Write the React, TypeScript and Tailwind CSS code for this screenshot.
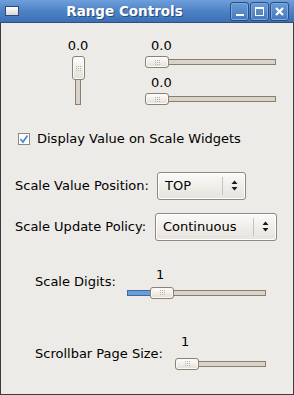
import React from "react";

const font = { fontFamily: '"DejaVu Sans", "Liberation Sans", sans-serif' };

function Grip() {
  const dots = [];
  for (let r = 0; r < 3; r++) {
    for (let c = 0; c < 3; c++) {
      dots.push(<span key={`${r}-${c}`} className="h-px w-px bg-[#b9b2a6]" />);
    }
  }
  return <div className="grid grid-cols-3 gap-px">{dots}</div>;
}

function Thumb({ vertical }: { vertical?: boolean }) {
  return (
    <div
      className={`flex shrink-0 items-center justify-center rounded-[3px] border border-[#8c826f] bg-gradient-to-b from-[#ffffff] to-[#e2ded7] shadow-[inset_0_0_0_1px_#fbfaf8] ${
        vertical ? "h-[24px] w-[13px]" : "h-[12px] w-[24px]"
      }`}
    >
      <Grip />
    </div>
  );
}

function HScale({
  width,
  offset,
  value,
  fill,
  labelHeight = 18,
}: {
  width: number;
  offset: number;
  value: string;
  fill?: boolean;
  labelHeight?: number;
}) {
  return (
    <div className="flex flex-col" style={{ width }}>
      <div
        className="text-[13px] leading-[15px] text-black"
        style={{ paddingLeft: offset + 6, height: labelHeight }}
      >
        {value}
      </div>
      <div className="flex items-center">
        {offset > 0 && (
          <div
            className={`h-[6px] border border-r-0 ${
              fill ? "border-[#3a6aa8] bg-[#6c9ed8]" : "border-[#8b7f6b] bg-[#d8d3cb]"
            }`}
            style={{ width: offset }}
          />
        )}
        <Thumb />
        <div className="h-[6px] flex-1 border border-l-0 border-[#8b7f6b] bg-[#d8d3cb]" />
      </div>
    </div>
  );
}

function UpDown() {
  return (
    <svg width="7" height="11" viewBox="0 0 7 11">
      <path d="M3.5 0.5 L6.5 4 L0.5 4 Z" fill="#1a1a1a" />
      <path d="M3.5 10.5 L6.5 7 L0.5 7 Z" fill="#1a1a1a" />
    </svg>
  );
}

function Combo({ width, text }: { width: number; text: string }) {
  return (
    <div
      className="flex h-[28px] items-center rounded-[3px] border border-[#8e887d] bg-gradient-to-b from-[#fbfaf9] to-[#e6e2dc] shadow-[inset_0_0_0_1px_#ffffff]"
      style={{ width }}
    >
      <span className="flex-1 pl-[7px] text-[13px] text-black">{text}</span>
      <div className="h-[18px] w-px bg-[#c9c4bb]" />
      <div className="flex w-[22px] items-center justify-center">
        <UpDown />
      </div>
    </div>
  );
}

function TitleButton({ children }: { children: React.ReactNode }) {
  return (
    <div className="flex h-[19px] w-[19px] items-center justify-center rounded-[3px] border border-[#284d7f] bg-gradient-to-b from-[#6a9bd8] to-[#4578bc] shadow-[inset_0_0_0_1px_#7eaae0]">
      {children}
    </div>
  );
}

export default function App() {
  return (
    <div className="flex h-[395px] w-[294px] flex-col bg-[#edebe7]" style={font}>
      {/* title bar */}
      <div className="relative flex h-[23px] shrink-0 items-center border-b border-[#2c4f80] bg-gradient-to-b from-[#6f9fdb] via-[#4e82c7] to-[#3d6fb4] px-[5px]">
        <div className="h-[10px] w-[14px] border border-[#2a4a78] bg-gradient-to-b from-[#ffffff] to-[#d8d8d8]" />
        <div className="flex-1 text-center text-[13.5px] font-bold text-white [text-shadow:1px_1px_0_#2b4b78]">
          Range Controls
        </div>
        <div className="flex gap-px">
          <TitleButton>
            <div className="mt-[8px] h-[2px] w-[8px] bg-white" />
          </TitleButton>
          <TitleButton>
            <div className="h-[9px] w-[9px] border border-t-2 border-white" />
          </TitleButton>
          <TitleButton>
            <svg width="9" height="9" viewBox="0 0 9 9">
              <path d="M1 1 L8 8 M8 1 L1 8" stroke="white" strokeWidth="2.2" />
            </svg>
          </TitleButton>
        </div>
      </div>

      {/* content */}
      <div className="flex flex-1 flex-col border-x border-b border-[#3c3c3c] text-[13px] text-black">
        {/* scales */}
        <div className="flex pt-[15px]">
          <div className="ml-[65px] flex w-[24px] flex-col items-center">
            <div className="h-[18px] text-[13px] leading-[15px]">0.0</div>
            <Thumb vertical />
            <div className="h-[25px] w-[6px] border border-t-0 border-[#8b7f6b] bg-[#d8d3cb]" />
          </div>
          <div className="ml-[55px] flex flex-col gap-[7px]">
            <HScale width={131} offset={0} value="0.0" />
            <HScale width={131} offset={0} value="0.0" />
          </div>
        </div>

        {/* checkbox */}
        <div className="mt-[24px] ml-[17px] flex items-center gap-[7px]">
          <div className="flex h-[12px] w-[12px] items-center justify-center border border-[#8e887d] bg-white">
            <svg width="10" height="10" viewBox="0 0 10 10">
              <path d="M1.5 5 L4 8 L8.5 1.5" stroke="#4a8ad8" strokeWidth="1.8" fill="none" />
            </svg>
          </div>
          <span>Display Value on Scale Widgets</span>
        </div>

        {/* combos */}
        <div className="mt-[23px] ml-[14px] flex items-center">
          <span className="w-[142px]">Scale Value Position:</span>
          <Combo width={89} text="TOP" />
        </div>
        <div className="mt-[13px] ml-[14px] flex items-center">
          <span className="w-[140px]">Scale Update Policy:</span>
          <Combo width={122} text="Continuous" />
        </div>

        {/* scale digits */}
        <div className="mt-[26px] ml-[34px] flex items-end">
          <span className="mb-[7px] w-[92px]">Scale Digits:</span>
          <HScale width={139} offset={23} value="1" fill labelHeight={20} />
        </div>

        {/* page size */}
        <div className="mt-[35px] ml-[34px] flex items-end">
          <span className="mb-[6px] w-[140px]">Scrollbar Page Size:</span>
          <HScale width={91} offset={0} value="1" labelHeight={24} />
        </div>
      </div>
    </div>
  );
}
